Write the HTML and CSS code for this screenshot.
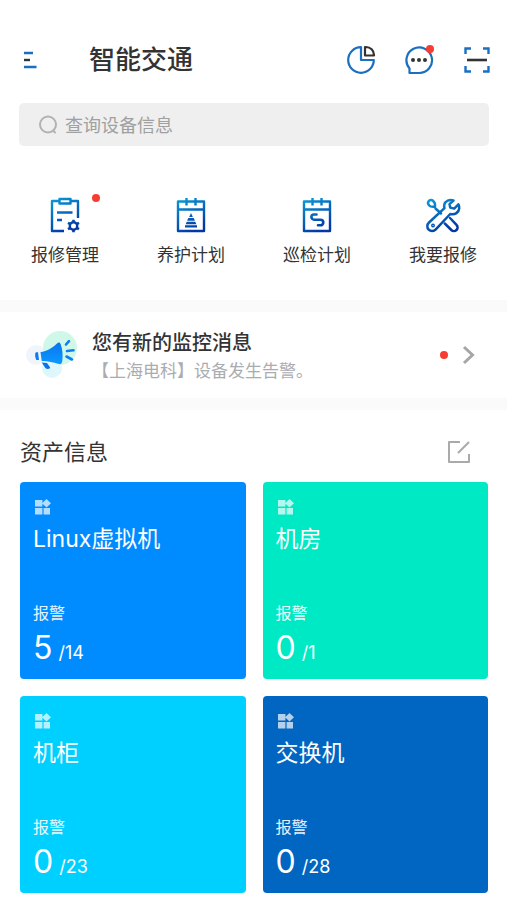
FILE: index.html
```
<!DOCTYPE html>
<html lang="zh-CN">
<head>
<meta charset="utf-8">
<meta name="viewport" content="width=device-width, initial-scale=1">
<title>智能交通</title>
<link rel="stylesheet" href="styles.css">
</head>
<body>
<svg class="defs" aria-hidden="true">
  <defs>
    <linearGradient id="ink" gradientUnits="userSpaceOnUse" x1="8" y1="2" x2="24" y2="34">
      <stop offset="0" stop-color="#0a9bd8"/>
      <stop offset="1" stop-color="#0338a4"/>
    </linearGradient>
    <linearGradient id="horn" x1="0" y1="0" x2="0" y2="1">
      <stop offset="0" stop-color="#0b74ee"/>
      <stop offset="1" stop-color="#0a9aff"/>
    </linearGradient>
    <symbol id="tiles" viewBox="0 0 16 16">
      <path fill="currentColor" d="M0 1h7.400v6.400H0zM0 9h7.400v6.400H0zM8.600 9H15v6.400H8.600zM11.500 0l4.500 4.300-4.500 4.300L7 4.300z"/>
    </symbol>
  </defs>
</svg>

<header class="topbar">
  <button class="icon-btn menu" aria-label="菜单">
    <svg width="14" height="18" viewBox="0 0 14 18" fill="none" stroke-width="2.400">
      <path stroke="#1a6fc0" d="M1 2h9M1 16h12.500"/>
      <path stroke="#333" d="M1 9h6"/>
    </svg>
  </button>
  <h1>智能交通</h1>
  <nav class="tools">
    <button class="icon-btn" aria-label="统计">
      <svg width="30" height="30" viewBox="0 0 30 30" fill="none" stroke-width="2.200" stroke-linejoin="round">
        <path stroke="#1a6fc0" d="M15 2.200A12.800 12.800 0 1 0 27.800 15H15z"/>
        <path stroke="#333" d="M19 2h1a8 8 0 0 1 8 8v.500h-9z"/>
      </svg>
    </button>
    <button class="icon-btn" aria-label="消息">
      <svg width="30" height="30" viewBox="0 0 30 30" fill="none">
        <path stroke="#1a6fc0" stroke-width="2.200" stroke-linejoin="round" d="M5.500 28v-4.500A12.800 12.800 0 1 1 15 28z"/>
        <g fill="#333"><circle cx="9" cy="15" r="2"/><circle cx="15" cy="15" r="2"/><circle cx="21" cy="15" r="2"/></g>
      </svg>
      <span class="dot dot-corner"></span>
    </button>
    <button class="icon-btn" aria-label="扫一扫">
      <svg width="30" height="30" viewBox="0 0 30 30" fill="none" stroke-width="2.400">
        <path stroke="#1a6fc0" d="M3.500 9V3.500H9M21 3.500h5.500V9M26.500 21v5.500H21M9 26.500H3.500V21"/>
        <path stroke="#333" stroke-width="2.600" d="M5 15h20"/>
      </svg>
    </button>
  </nav>
</header>

<main>
  <form class="search" role="search">
    <svg width="20" height="20" viewBox="0 0 20 20" fill="none" stroke="#b2b2b2" stroke-width="2" stroke-linecap="round">
      <circle cx="10" cy="9.500" r="8"/><path d="M15 15.500l2 2"/>
    </svg>
    <input type="search" aria-label="查询设备信息" placeholder="查询设备信息">
  </form>

  <nav class="actions">
    <a href="#repair">
      <svg width="40" height="40" viewBox="0 0 40 40" fill="none" stroke="url(#ink)" stroke-width="2.400" stroke-linejoin="round">
        <path d="M14.500 5H7v30h12M25.500 5H33v17"/>
        <path d="M14.500 3h11v4.500h-11z"/>
        <path d="M12 16.500h15.500M12 24h5"/>
        <circle cx="28.500" cy="30" r="3.700" stroke-width="2.400"/>
        <path stroke-width="2.600" d="M28.500 26.500v-2.800M28.500 33.500v2.800M31.500 28.200l2.500-1.400M31.500 31.800l2.500 1.400M25.500 28.200L23 26.800M25.500 31.800L23 33.200"/>
      </svg>
      <span>报修管理</span>
      <i class="dot dot-action"></i>
    </a>
    <a href="#maintain">
      <svg width="40" height="40" viewBox="0 0 40 40" fill="none" stroke="url(#ink)" stroke-width="2.400">
        <path d="M7 5.500h26v29.500H7zM7 13.500h26M15.500 2v7.500M24.500 2v7.500" stroke-linejoin="round"/>
        <path fill="url(#ink)" stroke="none" d="M20 17l1.900 4h-3.800zM17.300 22h5.400l1.200 2.700h-7.800zM15.700 25.700h8.600l1 2.600H14.700zM14 29.300h12v2.200H14z"/>
      </svg>
      <span>养护计划</span>
    </a>
    <a href="#inspect">
      <svg width="40" height="40" viewBox="0 0 40 40" fill="none" stroke="url(#ink)" stroke-width="2.400" stroke-linejoin="round">
        <path d="M7 5.500h26v29.500H7zM7 13.500h26M15.500 2v7.500M24.500 2v7.500"/>
        <path stroke-width="2.600" stroke-linecap="round" d="M19.500 18.500H17a2.600 2.600 0 0 0 0 5.200h6.500a2.800 2.800 0 0 1 0 5.600H21"/>
      </svg>
      <span>巡检计划</span>
    </a>
    <a href="#report">
      <svg width="40" height="40" viewBox="0 0 40 40" fill="none" stroke="url(#ink)" stroke-width="2.500" stroke-linejoin="round" stroke-linecap="round">
        <path d="M30.500 4.500c-4-1.600-8.300.5-9.200 4.200-.3 1.300-.2 2.300.2 3.400L6 26.500c-2.200 2.200-2.200 5.200-.3 7.100s5 1.900 7.100-.3l14.400-15.300c4.900 1.200 8.700-1.700 9-5.700.1-1.300-.1-2.600-.8-3.900l-4.200 4.200-3.900-1-.8-3.500z"/>
        <path d="M12.500 12.500l5.500 5M5.500 5.500a3 3 0 0 1 4.500-.8c1.800 1.500 2.300 3.500 2 6-2.500.4-4.700.2-6-1.500a3 3 0 0 1-.5-3.700zM27 22l6.500 6.800a3.600 3.600 0 0 1-5.200 5.200l-6.500-6.500"/>
        <circle cx="10" cy="29.500" r=".7"/>
      </svg>
      <span>我要报修</span>
    </a>
  </nav>

  <a class="notice" href="#notice">
    <svg width="54" height="50" viewBox="0 0 54 50" fill="none">
      <circle cx="10" cy="25" r="10" fill="#f0f5fc"/>
      <circle cx="34" cy="18" r="17" fill="#d0f8e9"/>
      <circle cx="26" cy="38" r="10" fill="#dff6fd"/>
      <path fill="url(#horn)" d="M14.500 22c6.500-.8 11.500-4 16.500-8.600 1.800-1.500 3-1 3.700.8 2 5.500 2.300 11.500 1.500 17.300-.4 2.200-1.500 3-3.500 2.500-6-1.800-11.200-3.200-17-3z"/>
      <path fill="#0a7cf3" d="M10 22.300h2l1 7.700h-2.300c-1.500 0-2.200-7.500-.7-7.700z"/>
      <path fill="#0a72ea" d="M15.700 32.500l5.300.5 3 4.300c.6 1.700-3.300 2.200-4.600.7z"/>
      <path stroke="#0a80f4" stroke-width="2.600" stroke-linecap="round" d="M40 14.500l3-3.300M41 21l6.500-.700M40.500 26.500l5.500 3"/>
    </svg>
    <div class="notice-text">
      <strong>您有新的监控消息</strong>
      <p>【上海电科】设备发生告警。</p>
    </div>
    <i class="dot"></i>
    <svg width="14" height="20" viewBox="0 0 14 20" fill="none" stroke="#a6a6a6" stroke-width="3"><path d="M2 2l8.500 8L2 18"/></svg>
  </a>

  <section class="assets">
    <div class="assets-head">
      <h2>资产信息</h2>
      <button class="icon-btn" aria-label="编辑">
        <svg width="24" height="24" viewBox="0 0 24 24" fill="none" stroke="#aaa" stroke-width="2" stroke-linejoin="round"><path d="M13 2H2v20h20v-8M22 2L11 13"/></svg>
      </button>
    </div>
    <div class="cards">
      <article class="card blue">
        <svg class="tiles"><use href="#tiles"/></svg>
        <h3>Linux虚拟机</h3>
        <p class="label">报警</p>
        <p class="count"><b>5</b><span>/14</span></p>
      </article>
      <article class="card green">
        <svg class="tiles"><use href="#tiles"/></svg>
        <h3>机房</h3>
        <p class="label">报警</p>
        <p class="count"><b>0</b><span>/1</span></p>
      </article>
      <article class="card cyan">
        <svg class="tiles"><use href="#tiles"/></svg>
        <h3>机柜</h3>
        <p class="label">报警</p>
        <p class="count"><b>0</b><span>/23</span></p>
      </article>
      <article class="card navy">
        <svg class="tiles"><use href="#tiles"/></svg>
        <h3>交换机</h3>
        <p class="label">报警</p>
        <p class="count"><b>0</b><span>/28</span></p>
      </article>
    </div>
  </section>
</main>
</body>
</html>
```
FILE: styles.css
```
* {
  box-sizing: border-box;
}

body,
h1,
h2,
h3,
p {
  margin: 0;
}

body {
  background: #fff;
  color: #333;
  font-family: Inter, "Noto Sans CJK SC", sans-serif;
}

h1,
h2,
h3,
b,
strong {
  font-weight: 400;
}

a {
  color: inherit;
  text-decoration: none;
}

svg {
  display: block;
  flex: none;
}

.defs {
  position: absolute;
  width: 0;
  height: 0;
}

.icon-btn {
  position: relative;
  padding: 0;
  border: 0;
  background: none;
}

.dot {
  flex: none;
  width: 8px;
  height: 8px;
  border-radius: 50%;
  background: #f73c32;
}

.topbar {
  display: flex;
  align-items: center;
  height: 103px;
  padding: 17px 15px 0 23px;
}

.topbar h1 {
  flex: 1;
  margin-left: 52px;
  font-size: 26px;
  font-weight: 500;
  line-height: 36px;
}

.tools {
  display: flex;
  gap: 28px;
}

.dot-corner {
  position: absolute;
  top: 0;
  right: 0;
}

.search {
  display: flex;
  align-items: center;
  gap: 7px;
  height: 43px;
  margin: 0 18px 0 19px;
  padding: 0 19px;
  border-radius: 5px;
  background: #efefef;
}

.search input {
  flex: 1;
  min-width: 0;
  padding: 2px 0 0;
  border: 0;
  outline: 0;
  background: none;
  color: #333;
  font: inherit;
  font-size: 18px;
}

.search input::placeholder {
  color: #a0a0a0;
}

.actions {
  display: grid;
  grid-template-columns: repeat(4, 1fr);
  height: 154px;
  padding: 50px 1px 0 2px;
}

.actions a {
  position: relative;
  display: flex;
  flex-direction: column;
  align-items: center;
  gap: 7px;
  font-size: 17px;
  line-height: 24px;
}

.dot-action {
  position: absolute;
  top: -2px;
  left: calc(50% + 27px);
}

.notice {
  display: flex;
  align-items: center;
  height: 110px;
  padding: 0 31px 0 26px;
  border: solid #fafafa;
  border-width: 12px 0;
}

.notice-text {
  flex: 1;
  margin-left: 12px;
  padding-top: 2px;
}

.notice strong {
  display: block;
  font-size: 20px;
  font-weight: 500;
  line-height: 30px;
}

.notice p {
  color: #aaacb0;
  font-size: 17px;
  line-height: 26px;
}

.notice .dot {
  margin-right: 14px;
}

.assets {
  padding: 0 19px 8px 20px;
}

.assets-head {
  display: flex;
  align-items: center;
  justify-content: space-between;
  height: 72px;
  padding: 12px 17px 0 0;
}

.assets h2 {
  font-size: 22px;
  line-height: 32px;
}

.cards {
  display: grid;
  grid-template-columns: 1fr 1fr;
  gap: 17px;
}

.card {
  height: 197px;
  padding: 17px 13px 0;
  border-radius: 4px;
  color: #fff;
}

.blue {
  background: #008cff;
}

.green {
  background: #00e9c5;
}

.cyan {
  background: #00d0ff;
}

.navy {
  background: #0066c2;
}

.tiles {
  width: 16px;
  height: 16px;
  margin-left: 2px;
  opacity: 0.7;
}

.card h3 {
  margin-top: 7px;
  font-size: 23px;
  line-height: 34px;
}

.label {
  margin-top: 45px;
  font-size: 16px;
  line-height: 24px;
  opacity: 0.9;
}

.count {
  display: flex;
  align-items: baseline;
  gap: 6px;
  line-height: 46px;
}

.count b {
  font-size: 32px;
}

.count span {
  font-size: 18px;
}
```
